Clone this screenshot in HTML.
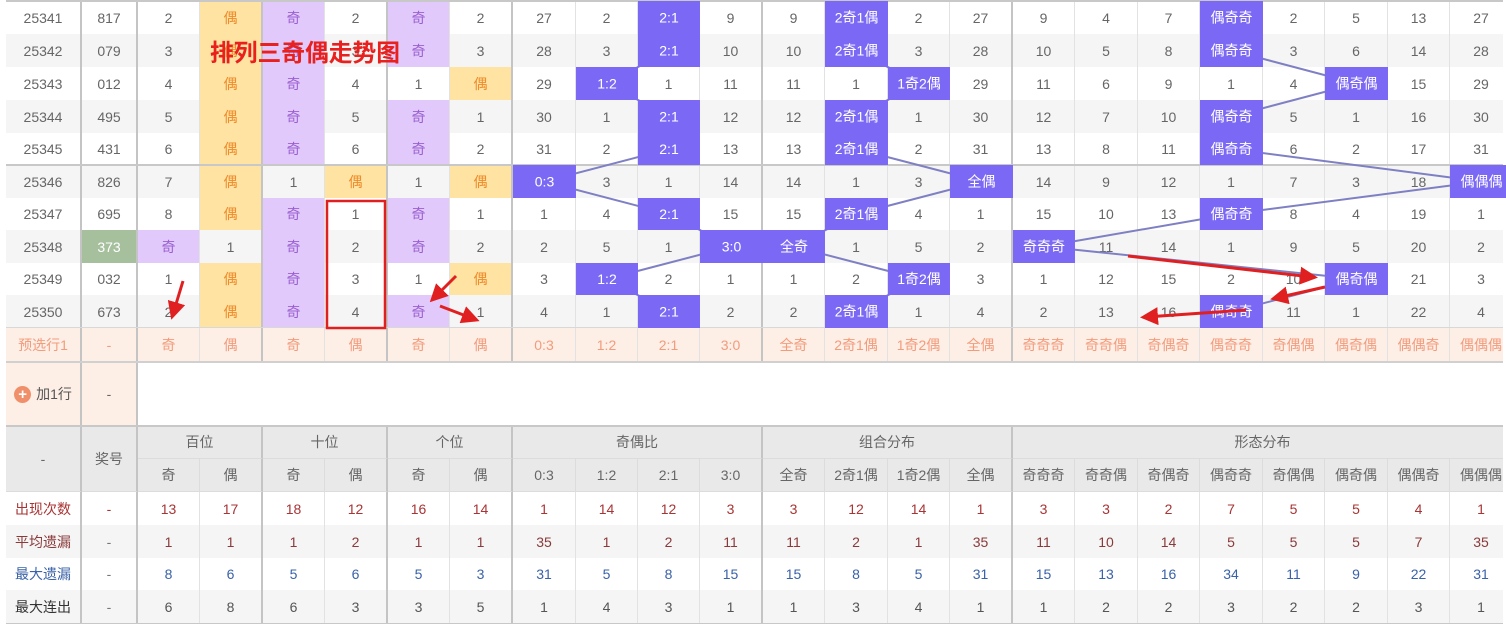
<!DOCTYPE html>
<html><head><meta charset="utf-8"><style>
*{box-sizing:border-box;margin:0;padding:0}
body{width:1506px;height:627px;background:#fff;position:relative;overflow:hidden;font-family:"Liberation Sans","Noto Sans CJK SC",sans-serif;font-size:14px;color:#666}
#wrap{position:absolute;left:6px;top:0;width:1497px;height:627px;overflow:hidden}
.r{position:absolute;left:0;display:grid;grid-template-columns:76px 56px 62px 63px 62px 63px 62px 63px 63px 62px 62px 63px 62px 63px 62px 63px 62px 63px 62px 63px 62px 63px 62px 63px;width:1507px}
.r>div{display:flex;align-items:center;justify-content:center;border-right:1px solid #e2e2e2;white-space:nowrap;overflow:hidden}
.r>div:nth-child(1),.r>div:nth-child(2),.r>div:nth-child(4),.r>div:nth-child(6),.r>div:nth-child(8),.r>div:nth-child(12),.r>div:nth-child(16){border-right:2px solid #c4c4c4}
.g{background:#f5f5f5}
.y{background:#ffe3a2;color:#ef8a2a}
.p{background:#e1c9fb;color:#9b5fd0}
.gr{background:#a6c09e;color:#fff}
.pr>div{background:#fdeee6;color:#f29c7c}
.hd{background:#e9e9e9}
.hd div{display:flex;align-items:center;justify-content:center;border-right:1px solid #dcdcdc;border-bottom:1px solid #dcdcdc}
.c1>div{color:#a83434}
.c2>div{color:#8a3a3a}
.c3>div{color:#3a62a8}
.c4>div{color:#555}
.c4>div:first-child{color:#333}
.c2>div:nth-child(2),.c3>div:nth-child(2),.c4>div:nth-child(2){color:#777}
.hl{position:absolute;left:0;width:1507px;background:#c8c8c8}
</style></head><body>
<div id="wrap">
<div class="r" style="top:1px;height:33px"><div>25341</div><div>817</div><div>2</div><div class="y">偶</div><div class="p">奇</div><div>2</div><div class="p">奇</div><div>2</div><div>27</div><div>2</div><div></div><div>9</div><div>9</div><div></div><div>2</div><div>27</div><div>9</div><div>4</div><div>7</div><div></div><div>2</div><div>5</div><div>13</div><div>27</div></div>
<div class="r g" style="top:34px;height:33px"><div>25342</div><div>079</div><div>3</div><div class="y">偶</div><div class="p">奇</div><div>3</div><div class="p">奇</div><div>3</div><div>28</div><div>3</div><div></div><div>10</div><div>10</div><div></div><div>3</div><div>28</div><div>10</div><div>5</div><div>8</div><div></div><div>3</div><div>6</div><div>14</div><div>28</div></div>
<div class="r" style="top:67px;height:33px"><div>25343</div><div>012</div><div>4</div><div class="y">偶</div><div class="p">奇</div><div>4</div><div>1</div><div class="y">偶</div><div>29</div><div></div><div>1</div><div>11</div><div>11</div><div>1</div><div></div><div>29</div><div>11</div><div>6</div><div>9</div><div>1</div><div>4</div><div></div><div>15</div><div>29</div></div>
<div class="r g" style="top:100px;height:33px"><div>25344</div><div>495</div><div>5</div><div class="y">偶</div><div class="p">奇</div><div>5</div><div class="p">奇</div><div>1</div><div>30</div><div>1</div><div></div><div>12</div><div>12</div><div></div><div>1</div><div>30</div><div>12</div><div>7</div><div>10</div><div></div><div>5</div><div>1</div><div>16</div><div>30</div></div>
<div class="r" style="top:133px;height:32px"><div>25345</div><div>431</div><div>6</div><div class="y">偶</div><div class="p">奇</div><div>6</div><div class="p">奇</div><div>2</div><div>31</div><div>2</div><div></div><div>13</div><div>13</div><div></div><div>2</div><div>31</div><div>13</div><div>8</div><div>11</div><div></div><div>6</div><div>2</div><div>17</div><div>31</div></div>
<div class="r g" style="top:165px;height:33px"><div>25346</div><div>826</div><div>7</div><div class="y">偶</div><div>1</div><div class="y">偶</div><div>1</div><div class="y">偶</div><div></div><div>3</div><div>1</div><div>14</div><div>14</div><div>1</div><div>3</div><div></div><div>14</div><div>9</div><div>12</div><div>1</div><div>7</div><div>3</div><div>18</div><div></div></div>
<div class="r" style="top:198px;height:32px"><div>25347</div><div>695</div><div>8</div><div class="y">偶</div><div class="p">奇</div><div>1</div><div class="p">奇</div><div>1</div><div>1</div><div>4</div><div></div><div>15</div><div>15</div><div></div><div>4</div><div>1</div><div>15</div><div>10</div><div>13</div><div></div><div>8</div><div>4</div><div>19</div><div>1</div></div>
<div class="r g" style="top:230px;height:33px"><div>25348</div><div class="gr">373</div><div class="p">奇</div><div>1</div><div class="p">奇</div><div>2</div><div class="p">奇</div><div>2</div><div>2</div><div>5</div><div>1</div><div></div><div></div><div>1</div><div>5</div><div>2</div><div></div><div>11</div><div>14</div><div>1</div><div>9</div><div>5</div><div>20</div><div>2</div></div>
<div class="r" style="top:263px;height:32px"><div>25349</div><div>032</div><div>1</div><div class="y">偶</div><div class="p">奇</div><div>3</div><div>1</div><div class="y">偶</div><div>3</div><div></div><div>2</div><div>1</div><div>1</div><div>2</div><div></div><div>3</div><div>1</div><div>12</div><div>15</div><div>2</div><div>10</div><div></div><div>21</div><div>3</div></div>
<div class="r g" style="top:295px;height:33px"><div>25350</div><div>673</div><div>2</div><div class="y">偶</div><div class="p">奇</div><div>4</div><div class="p">奇</div><div>1</div><div>4</div><div>1</div><div></div><div>2</div><div>2</div><div></div><div>1</div><div>4</div><div>2</div><div>13</div><div>16</div><div></div><div>11</div><div>1</div><div>22</div><div>4</div></div>
<div class="r pr" style="top:328px;height:34px"><div>预选行1</div><div>-</div><div>奇</div><div>偶</div><div>奇</div><div>偶</div><div>奇</div><div>偶</div><div>0:3</div><div>1:2</div><div>2:1</div><div>3:0</div><div>全奇</div><div>2奇1偶</div><div>1奇2偶</div><div>全偶</div><div>奇奇奇</div><div>奇奇偶</div><div>奇偶奇</div><div>偶奇奇</div><div>奇偶偶</div><div>偶奇偶</div><div>偶偶奇</div><div>偶偶偶</div></div>
<div style="position:absolute;left:0;top:362px;width:76px;height:64px;background:#fdeee6;border-right:2px solid #c4c4c4;display:flex;align-items:center;justify-content:center;color:#555"><span style="display:inline-block;width:17px;height:17px;border-radius:50%;background:#f0906a;color:#fff;font-size:15px;line-height:17px;text-align:center;margin-right:5px;font-weight:bold">+</span>加1行</div>
<div style="position:absolute;left:76px;top:362px;width:56px;height:64px;background:#fdeee6;border-right:2px solid #c4c4c4;display:flex;align-items:center;justify-content:center">-</div>
<div class="hd" style="position:absolute;left:0;top:426px;width:1507px;height:66px;display:grid;grid-template-columns:76px 56px 62px 63px 62px 63px 62px 63px 63px 62px 62px 63px 62px 63px 62px 63px 62px 63px 62px 63px 62px 63px 62px 63px;grid-template-rows:33px 33px">
<div style="grid-row:1/3;border-right:2px solid #c4c4c4">-</div><div style="grid-row:1/3;border-right:2px solid #c4c4c4">奖号</div>
<div style="grid-column:3/5;border-right:2px solid #c4c4c4">百位</div><div style="grid-column:5/7;border-right:2px solid #c4c4c4">十位</div><div style="grid-column:7/9;border-right:2px solid #c4c4c4">个位</div><div style="grid-column:9/13;border-right:2px solid #c4c4c4">奇偶比</div><div style="grid-column:13/17;border-right:2px solid #c4c4c4">组合分布</div><div style="grid-column:17/25">形态分布</div>
<div>奇</div><div style="border-right:2px solid #c4c4c4">偶</div><div>奇</div><div style="border-right:2px solid #c4c4c4">偶</div><div>奇</div><div style="border-right:2px solid #c4c4c4">偶</div><div>0:3</div><div>1:2</div><div>2:1</div><div style="border-right:2px solid #c4c4c4">3:0</div><div>全奇</div><div>2奇1偶</div><div>1奇2偶</div><div style="border-right:2px solid #c4c4c4">全偶</div><div>奇奇奇</div><div>奇奇偶</div><div>奇偶奇</div><div>偶奇奇</div><div>奇偶偶</div><div>偶奇偶</div><div>偶偶奇</div><div>偶偶偶</div></div>
<div class="r c1" style="top:492px;height:33px"><div>出现次数</div><div>-</div><div>13</div><div>17</div><div>18</div><div>12</div><div>16</div><div>14</div><div>1</div><div>14</div><div>12</div><div>3</div><div>3</div><div>12</div><div>14</div><div>1</div><div>3</div><div>3</div><div>2</div><div>7</div><div>5</div><div>5</div><div>4</div><div>1</div></div>
<div class="r g c2" style="top:525px;height:33px"><div>平均遗漏</div><div>-</div><div>1</div><div>1</div><div>1</div><div>2</div><div>1</div><div>1</div><div>35</div><div>1</div><div>2</div><div>11</div><div>11</div><div>2</div><div>1</div><div>35</div><div>11</div><div>10</div><div>14</div><div>5</div><div>5</div><div>5</div><div>7</div><div>35</div></div>
<div class="r c3" style="top:558px;height:32px"><div>最大遗漏</div><div>-</div><div>8</div><div>6</div><div>5</div><div>6</div><div>5</div><div>3</div><div>31</div><div>5</div><div>8</div><div>15</div><div>15</div><div>8</div><div>5</div><div>31</div><div>15</div><div>13</div><div>16</div><div>34</div><div>11</div><div>9</div><div>22</div><div>31</div></div>
<div class="r g c4" style="top:590px;height:33px"><div>最大连出</div><div>-</div><div>6</div><div>8</div><div>6</div><div>3</div><div>3</div><div>5</div><div>1</div><div>4</div><div>3</div><div>1</div><div>1</div><div>3</div><div>4</div><div>1</div><div>1</div><div>2</div><div>2</div><div>3</div><div>2</div><div>2</div><div>3</div><div>1</div></div>
<div class="hl" style="top:0;height:2px"></div>
<div class="hl" style="top:164px;height:2px"></div>
<div class="hl" style="top:327px;height:1px;background:#d8d8d8"></div>
<div class="hl" style="top:361px;height:2px;background:#d0d0d0"></div>
<div class="hl" style="top:425px;height:2px"></div>
<div class="hl" style="top:623px;height:1px"></div>
</div>
<svg width="1506" height="627" style="position:absolute;left:0;top:0" font-family="Liberation Sans, Noto Sans CJK SC, sans-serif" font-size="14">
<defs><marker id="ah" markerWidth="6" markerHeight="6" refX="4" refY="3" orient="auto"><path d="M0,0 L6,3 L0,6 Z" fill="#e02020"/></marker></defs>
<g stroke="#7f7fc4" stroke-width="2" fill="none">
<polyline points="669,17.5 669,50.5 607,83.5 669,116.5 669,149 544.5,181.5 669,214 731.5,246.5 607,279 669,311.5"/>
<polyline points="856.5,17.5 856.5,50.5 919,83.5 856.5,116.5 856.5,149 981.5,181.5 856.5,214 794,246.5 919,279 856.5,311.5"/>
<polyline points="1231.5,17.5 1231.5,50.5 1356.5,83.5 1231.5,116.5 1231.5,149 1481.5,181.5 1231.5,214 1044,246.5 1356.5,279 1231.5,311.5"/>
</g>
<g fill="#7b68f5">
<rect x="638" y="1" width="62" height="33"/><rect x="638" y="34" width="62" height="33"/><rect x="576" y="67" width="62" height="33"/><rect x="638" y="100" width="62" height="33"/><rect x="638" y="133" width="62" height="32"/><rect x="513" y="165" width="63" height="33"/><rect x="638" y="198" width="62" height="32"/><rect x="700" y="230" width="63" height="33"/><rect x="576" y="263" width="62" height="32"/><rect x="638" y="295" width="62" height="33"/>
<rect x="825" y="1" width="63" height="33"/><rect x="825" y="34" width="63" height="33"/><rect x="888" y="67" width="62" height="33"/><rect x="825" y="100" width="63" height="33"/><rect x="825" y="133" width="63" height="32"/><rect x="950" y="165" width="63" height="33"/><rect x="825" y="198" width="63" height="32"/><rect x="763" y="230" width="62" height="33"/><rect x="888" y="263" width="62" height="32"/><rect x="825" y="295" width="63" height="33"/>
<rect x="1200" y="1" width="63" height="33"/><rect x="1200" y="34" width="63" height="33"/><rect x="1325" y="67" width="63" height="33"/><rect x="1200" y="100" width="63" height="33"/><rect x="1200" y="133" width="63" height="32"/><rect x="1450" y="165" width="56" height="33"/><rect x="1200" y="198" width="63" height="32"/><rect x="1013" y="230" width="62" height="33"/><rect x="1325" y="263" width="63" height="32"/><rect x="1200" y="295" width="63" height="33"/>
</g>
<g fill="#fff" text-anchor="middle">
<text x="669" y="22.5">2:1</text><text x="669" y="55.5">2:1</text><text x="607" y="88.5">1:2</text><text x="669" y="121.5">2:1</text><text x="669" y="154">2:1</text><text x="544.5" y="186.5">0:3</text><text x="669" y="219">2:1</text><text x="731.5" y="251.5">3:0</text><text x="607" y="284">1:2</text><text x="669" y="316.5">2:1</text>
<text x="856.5" y="22.5">2奇1偶</text><text x="856.5" y="55.5">2奇1偶</text><text x="919" y="88.5">1奇2偶</text><text x="856.5" y="121.5">2奇1偶</text><text x="856.5" y="154">2奇1偶</text><text x="981.5" y="186.5">全偶</text><text x="856.5" y="219">2奇1偶</text><text x="794" y="251.5">全奇</text><text x="919" y="284">1奇2偶</text><text x="856.5" y="316.5">2奇1偶</text>
<text x="1231.5" y="22.5">偶奇奇</text><text x="1231.5" y="55.5">偶奇奇</text><text x="1356.5" y="88.5">偶奇偶</text><text x="1231.5" y="121.5">偶奇奇</text><text x="1231.5" y="154">偶奇奇</text><text x="1481.5" y="186.5">偶偶偶</text><text x="1231.5" y="219">偶奇奇</text><text x="1044" y="251.5">奇奇奇</text><text x="1356.5" y="284">偶奇偶</text><text x="1231.5" y="316.5">偶奇奇</text>
</g>
<rect x="327" y="201" width="58" height="127" fill="none" stroke="#e02020" stroke-width="2.5"/>
<g stroke="#e02020" stroke-width="3" fill="none" marker-end="url(#ah)">
<line x1="183" y1="281" x2="173" y2="314"/>
<line x1="456" y1="276" x2="434" y2="298"/>
<line x1="440" y1="306" x2="474" y2="319"/>
<line x1="1128" y1="256" x2="1312" y2="277"/>
<line x1="1325" y1="287" x2="1276" y2="298"/>
<line x1="1246" y1="310" x2="1146" y2="317"/>
</g>
<text x="210" y="61" fill="#e8201e" font-size="24" font-weight="bold" textLength="190" lengthAdjust="spacingAndGlyphs">排列三奇偶走势图</text>
</svg>
</body></html>
